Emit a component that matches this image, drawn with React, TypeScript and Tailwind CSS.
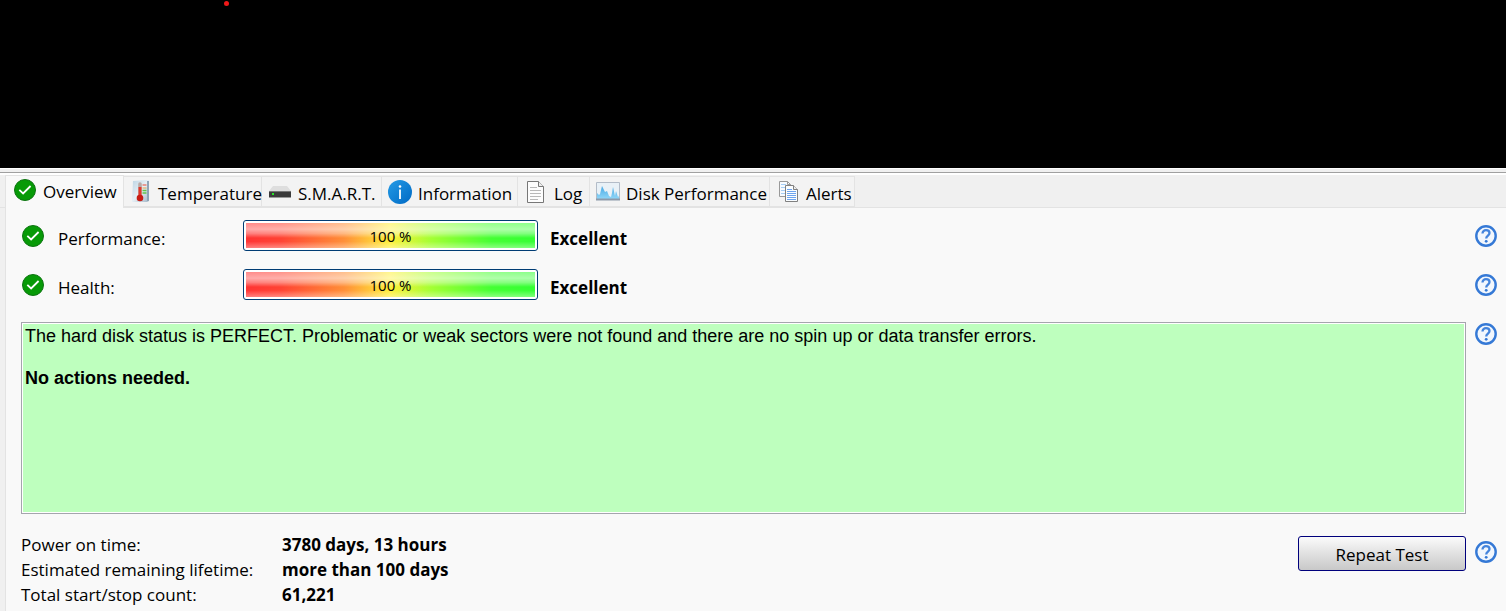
import type { ReactNode } from "react";

function CheckIcon() {
  return (
    <svg className="size-[22px] shrink-0" viewBox="0 0 22 22" aria-hidden="true">
      <circle cx="11" cy="11" r="10.5" fill="#079a07" stroke="#0e7412" />
      <path d="M5.300 10.800l3.800 3.600 7.500-7.400" fill="none" stroke="#fff" strokeWidth="1.8" />
    </svg>
  );
}

function ThermometerIcon() {
  return (
    <svg className="h-[23px] w-[18px] shrink-0" viewBox="0 0 18 23" aria-hidden="true">
      <defs>
        <linearGradient id="thermo" x1="0" y1="0" x2="1" y2="1">
          <stop offset="0" stopColor="#bdd5e4" />
          <stop offset="0.5" stopColor="#e6eff5" />
          <stop offset="1" stopColor="#a3b7c8" />
        </linearGradient>
      </defs>
      <path d="M1 1l14-1h2v21l-2 1H0z" fill="url(#thermo)" />
      <path d="M16 1v20" stroke="#8fa5b8" strokeWidth="2" />
      <path d="M8 4v14" stroke="#b9aaa7" strokeWidth="3.6" strokeLinecap="round" />
      <path d="M8 7v10" stroke="#e0382c" strokeWidth="3" />
      <circle cx="8" cy="18" r="3.3" fill="#c81c14" />
      <path d="M10.500 5h4" stroke="#e87f72" strokeWidth="1.500" />
      <path d="M10.500 8h4" stroke="#e4a14a" />
      <path d="M10.500 10.500h4M10.500 13h4" stroke="#62c64a" strokeWidth="1.500" />
    </svg>
  );
}

function DriveIcon() {
  return (
    <svg className="h-[14px] w-[22px] shrink-0" viewBox="0 0 22 14" aria-hidden="true">
      <path d="M4 1h14l4 5H0z" fill="#dedede" />
      <path d="M0 6h22v6.500H0z" fill="#3b3b3b" />
      <path d="M0 6.500h22" stroke="#777" />
      <path d="M0 12.500h22" stroke="#999" />
      <path d="M3 8h2v2H3z" fill="#27e827" />
    </svg>
  );
}

function InfoIcon() {
  return (
    <svg className="size-6 shrink-0" viewBox="0 0 24 24" aria-hidden="true">
      <defs>
        <linearGradient id="info" x1="0" y1="0" x2="1" y2="1">
          <stop offset="0" stopColor="#249be6" />
          <stop offset="1" stopColor="#0069c4" />
        </linearGradient>
      </defs>
      <circle cx="12" cy="12" r="12" fill="url(#info)" />
      <circle cx="12" cy="6.500" r="1.300" fill="#fff" />
      <path d="M12 9.500V19" stroke="#fff" strokeWidth="1.800" />
    </svg>
  );
}

function PageIcon() {
  return (
    <svg className="h-[22px] w-[17px] shrink-0" viewBox="0 0 17 22" aria-hidden="true">
      <path d="M.5.500h11l5 5v16H.5z" fill="#fdfdfd" stroke="#777" />
      <path d="M11.500.500v5h5" fill="#eee" stroke="#777" />
      <path d="M3 6.500h7M3 9.500h11M3 12.500h11M3 15.500h11M3 18.500h8" stroke="#b9b9b9" />
    </svg>
  );
}

function ChartIcon() {
  return (
    <svg className="h-[19px] w-6 shrink-0" viewBox="0 0 24 19" aria-hidden="true">
      <defs>
        <linearGradient id="chart" x1="0" y1="0" x2="0" y2="1">
          <stop offset="0" stopColor="#48a9e4" />
          <stop offset="1" stopColor="#8fd6f8" />
        </linearGradient>
      </defs>
      <path d="M.5.500h23v17H.5z" fill="#e9f1f7" stroke="#b3bcc8" />
      <path d="M1 17V11l2 2 1-1 2-8 2 4 1 2 2-1 2 5 2 1 1-4 1-6 2 9 1-5 2 6 1-1v3z" fill="url(#chart)" />
      <path d="M0 17.500h24" stroke="#8c9aab" strokeWidth="2" />
    </svg>
  );
}

function PagesIcon() {
  return (
    <svg className="h-[22px] w-[19px] shrink-0" viewBox="0 0 19 22" aria-hidden="true">
      <path d="M.5.500h8l3 3v12H.5z" fill="#f6faff" stroke="#999" />
      <path d="M8.500.500v3h3" fill="none" stroke="#999" />
      <path d="M2 3.500h5M2 6.500h4M2 9.500h4M2 12.500h4" stroke="#a5cdf5" />
      <path d="M6.500 4.500h8l4 4v12h-12z" fill="#fafdff" stroke="#808080" />
      <path d="M14.500 4.500v4h4" fill="#eee" stroke="#808080" />
      <path d="M8 8.500h5M8 10.500h9M8 12.500h9M8 14.500h9M8 16.500h9M8 18.500h9" stroke="#6ea4ee" />
    </svg>
  );
}

function HelpButton({ topic }: { topic: string }) {
  return (
    <button type="button" aria-label={`Help: ${topic}`} className="size-[22px] shrink-0">
      <svg className="size-[22px]" viewBox="0 0 22 22" aria-hidden="true">
        <circle cx="11" cy="11" r="9.700" fill="#f2f7fd" stroke="#3579d6" strokeWidth="2.400" />
        <path
          d="M7.500 8.400c0-2.100 1.500-3.200 3.500-3.200s3.500 1.100 3.500 2.900c0 2.500-3.300 2.500-3.300 5.400"
          fill="none"
          stroke="#4484dc"
          strokeWidth="2.300"
        />
        <circle cx="11.200" cy="16.300" r="1.400" fill="#3478d5" />
      </svg>
    </button>
  );
}

interface TabProps {
  label: string;
  icon: ReactNode;
  className: string;
}

const tabs: TabProps[] = [
  { label: "Temperature", icon: <ThermometerIcon />, className: "w-[138px] pl-2 gap-2" },
  { label: "S.M.A.R.T.", icon: <DriveIcon />, className: "w-[120px] pl-[7px] gap-[7px]" },
  { label: "Information", icon: <InfoIcon />, className: "w-[136px] pl-1.5 gap-1.5" },
  { label: "Log", icon: <PageIcon />, className: "w-[72px] pl-[9px] gap-2.5" },
  { label: "Disk Performance", icon: <ChartIcon />, className: "w-[180px] pl-1.5 gap-1.5" },
  { label: "Alerts", icon: <PagesIcon />, className: "w-[85px] pl-[9px] gap-2" },
];

function Tab({ label, icon, className }: TabProps) {
  return (
    <button
      type="button"
      role="tab"
      aria-selected="false"
      className={`flex h-[31px] items-center whitespace-nowrap border-y border-r border-[#e3e3e3] bg-[#f3f3f3] ${className}`}
    >
      {icon}
      <span className="pt-1">{label}</span>
    </button>
  );
}

function Meter({ label }: { label: string }) {
  return (
    <div className="flex h-[31px] items-center">
      <CheckIcon />
      <span className="ml-3.5 w-[185px] pt-1.5">{label}:</span>
      <div
        role="meter"
        aria-label={label}
        aria-valuenow={100}
        className="h-[31px] w-[295px] rounded-[3px] border border-[#003c74] bg-white p-0.5"
      >
        <div className="h-full bg-[linear-gradient(to_right,#ff2a2a,#ff3a2a_12%,#ff8a2e_34%,#fff030_50%,#a0ff2a_64%,#3cff2a_85%,#2aff2a)]">
          <div className="flex h-full items-center justify-center bg-[linear-gradient(to_bottom,rgb(255_255_255/0.45),rgb(255_255_255/0.6)_25%,rgb(255_255_255/0.4)_42%,rgb(255_255_255/0.04)_60%,rgb(255_255_255/0.06)_74%,rgb(255_255_255/0.4))] text-[15px]">
            100 %
          </div>
        </div>
      </div>
      <span className="ml-3 grow pt-1.5 font-bold">Excellent</span>
      <HelpButton topic={label} />
    </div>
  );
}

const stats = [
  { name: "Power on time:", value: "3780 days, 13 hours" },
  { name: "Estimated remaining lifetime:", value: "more than 100 days" },
  { name: "Total start/stop count:", value: "61,221" },
];

export default function App() {
  return (
    <div className="flex min-h-screen flex-col bg-[#f0f0f0] font-['Segoe_UI','Open_Sans','Noto_Sans',sans-serif] text-[17px] leading-6 text-black">
      <div className="flex h-42 bg-black pl-56">
        <span className="mt-px size-[5px] rounded-full bg-[#f01818]" />
      </div>
      <div className="h-[5px] border-t border-b border-t-white border-b-[#a0a0a0]" />
      <div className="h-0.5 bg-white" />

      <div role="tablist" className="flex h-[33px] items-end border-b border-[#e3e3e3] pl-[5px]">
        <button
          type="button"
          role="tab"
          aria-selected="true"
          className="-mb-px flex h-[33px] w-[119px] items-center gap-[7px] border-x border-t border-[#e3e3e3] bg-[#f9f9f9] pb-1 pl-2"
        >
          <CheckIcon />
          <span className="pt-[3px]">Overview</span>
        </button>
        {tabs.map((tab) => (
          <Tab key={tab.label} {...tab} />
        ))}
      </div>

      <main className="ml-[5px] grow border-l border-[#e3e3e3] bg-[#f9f9f9] pt-3 pr-[9px] pl-[15px]">
        <div className="flex flex-col gap-[18px] pl-px">
          <Meter label="Performance" />
          <Meter label="Health" />
        </div>

        <div className="mt-[22px] flex gap-[9px]">
          <section className="h-48 grow border border-[#a5a5ad] bg-white p-px">
            <div className="h-full bg-[#beffbe] px-0.5 pt-0.5 font-['Liberation_Sans',Arial,sans-serif] text-[18px] leading-[21px]">
              <p>
                The hard disk status is PERFECT. Problematic or weak sectors were not found and there
                are no spin up or data transfer errors.
              </p>
              <p className="mt-[21px] font-bold">No actions needed.</p>
            </div>
          </section>
          <div className="pt-px">
            <HelpButton topic="Status" />
          </div>
        </div>

        <div className="mt-[18px] flex items-start">
          <dl className="grid grow grid-cols-[261px_1fr] leading-[25px]">
            {stats.map((stat) => (
              <div key={stat.name} className="contents">
                <dt>{stat.name}</dt>
                <dd className="font-bold">{stat.value}</dd>
              </div>
            ))}
          </dl>
          <div className="flex items-start gap-[9px] pt-1">
            <button
              type="button"
              className="h-[35px] w-[168px] rounded-[3px] border border-[#00007c] bg-linear-to-b from-[#fbfbfb] to-[#c8c8c8] pt-0.5"
            >
              Repeat Test
            </button>
            <div className="pt-[5px]">
              <HelpButton topic="Repeat Test" />
            </div>
          </div>
        </div>
      </main>
    </div>
  );
}
